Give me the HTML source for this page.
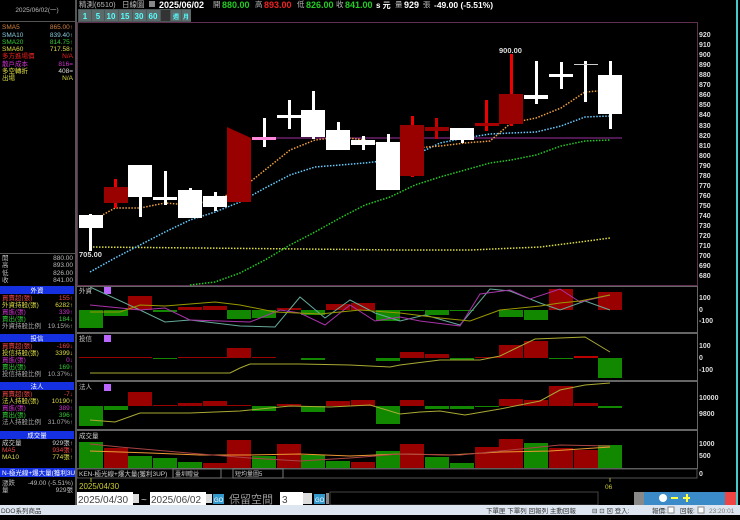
<!DOCTYPE html>
<html><head><meta charset="utf-8"><style>
body{margin:0;background:#000;width:740px;height:515px;overflow:hidden;font-family:"Liberation Sans","Noto Sans CJK TC",sans-serif}
svg text{font-family:"Liberation Sans","Noto Sans CJK TC",sans-serif}
</style></head><body>
<svg width="740" height="515" viewBox="0 0 740 515" xmlns="http://www.w3.org/2000/svg">
<rect width="740" height="515" fill="#000"/>
<!-- header -->
<g font-size="7.5" fill="#bbb">
<text x="79" y="7">精測(6510)</text><text x="122" y="7">日線圖</text>
<rect x="149" y="1" width="6" height="6" fill="#888"/>
<text x="159" y="8" font-size="9" font-weight="bold" fill="#fff">2025/06/02</text>
<text x="213" y="7">開</text><text x="222" y="8" font-size="9" font-weight="bold" fill="#2c2">880.00</text>
<text x="255" y="7">高</text><text x="264" y="8" font-size="9" font-weight="bold" fill="#e22">893.00</text>
<text x="297" y="7">低</text><text x="306" y="8" font-size="9" font-weight="bold" fill="#2c2">826.00</text>
<text x="336" y="7">收</text><text x="345" y="8" font-size="9" font-weight="bold" fill="#2c2">841.00</text>
<text x="376" y="8" font-size="8" font-weight="bold" fill="#fff">s 元</text>
<text x="395" y="7">量</text><text x="404" y="8" font-size="9" font-weight="bold" fill="#fff">929</text>
<text x="423" y="7">張</text><text x="434" y="8" font-size="8.5" font-weight="bold" fill="#fff">-49.00 (-5.51%)</text>
</g>
<!-- toolbar -->
<g font-size="8" font-weight="bold" fill="#5ff" text-anchor="middle">
<rect x="78" y="9" width="113" height="13" fill="#4a5858"/>
<rect x="79" y="10" width="12" height="11" fill="#5b6b6b"/><text x="85" y="19">1</text>
<rect x="92" y="10" width="12" height="11" fill="#5b6b6b"/><text x="98" y="19">5</text>
<rect x="105" y="10" width="13" height="11" fill="#5b6b6b"/><text x="111" y="19">10</text>
<rect x="119" y="10" width="13" height="11" fill="#5b6b6b"/><text x="125" y="19">15</text>
<rect x="133" y="10" width="13" height="11" fill="#5b6b6b"/><text x="139" y="19">30</text>
<rect x="147" y="10" width="13" height="11" fill="#5b6b6b"/><text x="153" y="19">60</text>
<rect x="161" y="10" width="9" height="11" fill="#333"/>
<rect x="171" y="10" width="10" height="11" fill="#5b6b6b"/><text x="176" y="19" font-size="6">週</text>
<rect x="182" y="10" width="9" height="11" fill="#5b6b6b"/><text x="186" y="19" font-size="6">月</text>
</g>
<!-- left panel -->
<rect x="75" y="0" width="2" height="505" fill="#555"/>
<text x="37" y="12" font-size="6.5" fill="#bbb" text-anchor="middle">2025/06/02(一)</text>
<rect x="0" y="21" width="75" height="1" fill="#555"/>
<g font-size="6.5">
<text x="2" y="29" fill="#d08040">SMA5</text><text x="73" y="29" fill="#d08040" text-anchor="end">865.00↑</text>
<text x="2" y="37" fill="#8cd">SMA10</text><text x="73" y="37" fill="#8cd" text-anchor="end">839.40↑</text>
<text x="2" y="44" fill="#3c3">SMA20</text><text x="73" y="44" fill="#3c3" text-anchor="end">814.75↑</text>
<text x="2" y="51" fill="#dd4">SMA60</text><text x="73" y="51" fill="#dd4" text-anchor="end">717.58↑</text>
<text x="2" y="58" fill="#e22">多方進場價</text><text x="73" y="58" fill="#e22" text-anchor="end">N/A</text>
<text x="2" y="66" fill="#c3c">散戶成本</text><text x="73" y="66" fill="#c3c" text-anchor="end">816=</text>
<text x="2" y="73" fill="#dd4">多空轉折</text><text x="73" y="73" fill="#ddd" text-anchor="end">408=</text>
<text x="2" y="80" fill="#dd4">出場</text><text x="73" y="80" fill="#dd4" text-anchor="end">N/A</text>
</g>
<rect x="0" y="253" width="75" height="1" fill="#555"/>
<g font-size="6.5" fill="#bbb">
<text x="2" y="260">開</text><text x="73" y="260" text-anchor="end">880.00</text>
<text x="2" y="267">高</text><text x="73" y="267" text-anchor="end">893.00</text>
<text x="2" y="275">低</text><text x="73" y="275" text-anchor="end">826.00</text>
<text x="2" y="282">收</text><text x="73" y="282" text-anchor="end">841.00</text>
</g>
<g font-size="6.5">
<rect x="0" y="286" width="74" height="8" fill="#1530e0"/><text x="37" y="292.5" fill="#fff" text-anchor="middle">外資</text>
<text x="2" y="300" fill="#e44">買賣超(張)</text><text x="73" y="300" fill="#e44" text-anchor="end">155↑</text>
<text x="2" y="307" fill="#dd4">外資持股(張)</text><text x="73" y="307" fill="#dd4" text-anchor="end">6282↑</text>
<text x="2" y="314" fill="#c3c">買進(張)</text><text x="73" y="314" fill="#c3c" text-anchor="end">339↑</text>
<text x="2" y="321" fill="#3c3">賣出(張)</text><text x="73" y="321" fill="#3c3" text-anchor="end">184↓</text>
<text x="2" y="328" fill="#aaa">外資持股比例</text><text x="73" y="328" fill="#aaa" text-anchor="end">19.15%↑</text>
<rect x="0" y="334" width="74" height="8" fill="#1530e0"/><text x="37" y="340.5" fill="#fff" text-anchor="middle">投信</text>
<text x="2" y="348" fill="#e44">買賣超(張)</text><text x="73" y="348" fill="#e44" text-anchor="end">-169↓</text>
<text x="2" y="355" fill="#dd4">投信持股(張)</text><text x="73" y="355" fill="#dd4" text-anchor="end">3399↓</text>
<text x="2" y="362" fill="#c3c">買進(張)</text><text x="73" y="362" fill="#c3c" text-anchor="end">0↓</text>
<text x="2" y="369" fill="#3c3">賣出(張)</text><text x="73" y="369" fill="#3c3" text-anchor="end">169↑</text>
<text x="2" y="376" fill="#aaa">投信持股比例</text><text x="73" y="376" fill="#aaa" text-anchor="end">10.37%↓</text>
<rect x="0" y="382" width="74" height="8" fill="#1530e0"/><text x="37" y="388.5" fill="#fff" text-anchor="middle">法人</text>
<text x="2" y="396" fill="#e44">買賣超(張)</text><text x="73" y="396" fill="#e44" text-anchor="end">-7↓</text>
<text x="2" y="403" fill="#dd4">法人持股(張)</text><text x="73" y="403" fill="#dd4" text-anchor="end">10190↑</text>
<text x="2" y="410" fill="#c3c">買進(張)</text><text x="73" y="410" fill="#c3c" text-anchor="end">389↑</text>
<text x="2" y="417" fill="#3c3">賣出(張)</text><text x="73" y="417" fill="#3c3" text-anchor="end">396↑</text>
<text x="2" y="424" fill="#aaa">法人持股比例</text><text x="73" y="424" fill="#aaa" text-anchor="end">31.07%↑</text>
<rect x="0" y="431" width="74" height="8" fill="#1530e0"/><text x="37" y="437.5" fill="#fff" text-anchor="middle">成交量</text>
<text x="2" y="445" fill="#ccc">成交量</text><text x="73" y="445" fill="#ccc" text-anchor="end">929張↑</text>
<text x="2" y="452" fill="#e44">MA5</text><text x="73" y="452" fill="#e44" text-anchor="end">934張↑</text>
<text x="2" y="459" fill="#dd4">MA10</text><text x="73" y="459" fill="#dd4" text-anchor="end">774張↑</text>
<rect x="0" y="468" width="75" height="9" fill="#1530e0"/><text x="2" y="475" fill="#fff">N-極光線+爆大量(獲利3U</text>
<text x="2" y="485" fill="#bbb">漲跌</text><text x="73" y="485" fill="#bbb" text-anchor="end">-49.00 (-5.51%)</text>
<text x="2" y="492" fill="#bbb">量</text><text x="73" y="492" fill="#bbb" text-anchor="end">929張</text>
</g>
<!-- main chart frame -->
<rect x="77.5" y="22.5" width="620" height="263" fill="none" stroke="#603050"/>
<rect x="736" y="0" width="2" height="505" fill="#4cc"/>
<g font-size="7" font-weight="bold" fill="#ddd">
<text x="699" y="37">920</text><text x="699" y="47">910</text><text x="699" y="57">900</text><text x="699" y="67">890</text><text x="699" y="77">880</text><text x="699" y="87">870</text><text x="699" y="97">860</text><text x="699" y="107">850</text><text x="699" y="117">840</text><text x="699" y="128">830</text><text x="699" y="138">820</text><text x="699" y="148">810</text><text x="699" y="158">800</text><text x="699" y="168">790</text><text x="699" y="178">780</text><text x="699" y="188">770</text><text x="699" y="198">760</text><text x="699" y="208">750</text><text x="699" y="218">740</text><text x="699" y="228">730</text><text x="699" y="238">720</text><text x="699" y="248">710</text><text x="699" y="258">700</text><text x="699" y="268">690</text><text x="699" y="278">680</text>
</g>
<line x1="252" y1="138" x2="622" y2="138" stroke="#a030a0" stroke-width="1"/>
<!-- MAs -->
<g fill="none" stroke-width="1.5" stroke-dasharray="1.5 1.5">
<polyline stroke="#dd4" points="90,247 200,248 300,249 400,250 470,250 540,247 580,242 610,238"/>
<polyline stroke="#2c2" points="190,285 215,282 240,273 265,260 290,245 315,232 340,218 365,205 390,197 415,185 440,177 465,170 490,163 511,160 536,155 561,146 585,141 610,140"/>
<polyline stroke="#6cf" points="90,272 115,258 140,245 165,232 190,220 215,212 240,202 265,188 290,175 315,167 340,165 365,163 390,160 415,155 440,143 465,138 490,134 511,133 536,132 561,126 585,117 610,116"/>
<polyline stroke="#f0a040" points="90,222 115,208 140,208 165,203 190,205 215,200 240,190 265,170 290,150 315,140 340,137 365,140 390,147 415,148 440,146 465,143 490,141 511,123 536,118 561,108 585,92 610,90"/>
</g>
<!-- candles -->
<g fill="#fff">
<rect x="89" y="214" width="3" height="37"/><rect x="79" y="215" width="24" height="13"/>
<rect x="114" y="179" width="3" height="29" fill="#e00"/><rect x="104" y="187" width="24" height="16" fill="#900"/>
<rect x="139" y="165" width="3" height="52"/><rect x="128" y="165" width="24" height="32"/>
<rect x="164" y="171" width="3" height="34"/><rect x="153" y="197" width="24" height="3"/>
<rect x="189" y="188" width="3" height="30"/><rect x="178" y="190" width="24" height="28"/>
<rect x="214" y="192" width="3" height="19"/><rect x="203" y="196" width="24" height="11"/>
<polygon points="227,127 251,138 251,202 227,202" fill="#900"/>
<rect x="263" y="118" width="3" height="29"/><rect x="252" y="137" width="24" height="3" fill="#f8d"/>
<rect x="288" y="100" width="3" height="29"/><rect x="277" y="115" width="24" height="3"/>
<rect x="312" y="91" width="3" height="48"/><rect x="301" y="110" width="24" height="27"/>
<rect x="337" y="122" width="3" height="12"/><rect x="326" y="130" width="24" height="20"/>
<rect x="362" y="136" width="3" height="14"/><rect x="351" y="140" width="24" height="5"/>
<rect x="387" y="134" width="3" height="10"/><rect x="376" y="142" width="24" height="48"/>
<rect x="411" y="116" width="3" height="61" fill="#e00"/><rect x="400" y="125" width="24" height="51" fill="#900"/>
<rect x="435" y="118" width="3" height="21" fill="#c00"/><rect x="425" y="127" width="24" height="4" fill="#900"/>
<rect x="461" y="128" width="3" height="15"/><rect x="450" y="128" width="24" height="12"/>
<rect x="485" y="100" width="3" height="31" fill="#e00"/><rect x="475" y="123" width="24" height="3" fill="#a00"/>
<rect x="510" y="54" width="3" height="72" fill="#e00"/><rect x="499" y="94" width="24" height="30" fill="#900"/>
<rect x="535" y="61" width="3" height="43"/><rect x="524" y="95" width="24" height="4"/>
<rect x="560" y="62" width="3" height="27"/><rect x="549" y="74" width="24" height="3"/>
<rect x="584" y="61" width="3" height="41"/><rect x="574" y="64" width="24" height="1" fill="#ccc"/>
<rect x="609" y="61" width="3" height="68"/><rect x="598" y="75" width="24" height="39"/>
</g>
<text x="79" y="257" font-size="7.5" font-weight="bold" fill="#ddd">705.00</text>
<text x="499" y="53" font-size="7.5" font-weight="bold" fill="#ddd">900.00</text>
<!-- sub panels frames -->
<g fill="#666">
<rect x="77" y="286" width="621" height="1"/><rect x="77" y="332" width="621" height="2"/><rect x="77" y="380" width="621" height="2"/><rect x="77" y="429" width="621" height="2"/><rect x="77" y="468" width="621" height="1"/><rect x="697" y="286" width="1" height="183"/>
</g>
<g font-size="6.5" fill="#ccc">
<text x="79" y="293">外資</text><text x="79" y="341">投信</text><text x="79" y="389">法人</text><text x="79" y="438">成交量</text>
</g>
<g fill="#b6f"><rect x="104" y="287" width="7" height="7"/><rect x="104" y="335" width="7" height="7"/><rect x="104" y="384" width="7" height="7"/></g>
<g font-size="7" font-weight="bold" fill="#ddd">
<text x="699" y="300">100</text><text x="699" y="312">0</text><text x="699" y="323">-100</text>
<text x="699" y="348">100</text><text x="699" y="360">0</text><text x="699" y="372">-100</text>
<text x="699" y="400">10000</text><text x="699" y="416">9800</text>
<text x="699" y="446">1000</text><text x="699" y="458">500</text><text x="699" y="476">0</text>
</g>
<!-- 外資 bars zero 310 -->
<g>
<rect x="79" y="310" width="24" height="18" fill="#180"/><rect x="104" y="310" width="24" height="6" fill="#180"/><rect x="128" y="296" width="24" height="14" fill="#900"/><rect x="153" y="310" width="24" height="2" fill="#180"/><rect x="178" y="307" width="24" height="3" fill="#900"/><rect x="203" y="306" width="24" height="4" fill="#900"/><rect x="227" y="310" width="24" height="9" fill="#180"/><rect x="252" y="310" width="24" height="8" fill="#180"/><rect x="277" y="308" width="24" height="2" fill="#900"/><rect x="301" y="310" width="24" height="5" fill="#180"/><rect x="326" y="304" width="24" height="6" fill="#900"/><rect x="351" y="303" width="24" height="7" fill="#900"/><rect x="376" y="310" width="24" height="11" fill="#180"/><rect x="400" y="310" width="24" height="1" fill="#180"/><rect x="425" y="310" width="24" height="5" fill="#180"/><rect x="450" y="310" width="24" height="1" fill="#180"/><rect x="499" y="310" width="24" height="7" fill="#180"/><rect x="524" y="310" width="24" height="10" fill="#180"/><rect x="549" y="289" width="24" height="21" fill="#900"/><rect x="598" y="292" width="24" height="18" fill="#900"/>
</g>
<g fill="none" stroke-width="1">
<polyline stroke="#6a9" points="90,287 140,310 165,322 190,320 240,326 275,327 300,297 325,318 350,300 375,313 400,321 425,315 460,325 490,289 510,291 540,303 560,310 585,301 610,310"/>
<polyline stroke="#a3a" points="90,305 140,310 165,308 190,320 250,322 280,310 300,313 325,325 350,305 375,321 400,317 420,321 460,326 480,294 510,290 530,299 560,289 580,302 610,295"/>
<polyline stroke="#990" points="90,312 120,312 140,305 165,306 215,302 240,305 275,312 320,314 360,310 400,313 440,318 470,321 500,310 540,306 560,303 580,301 610,295"/>
</g>
<!-- 投信 zero 358 -->
<g>
<rect x="79" y="357" width="73" height="1" fill="#900"/><rect x="153" y="358" width="24" height="1" fill="#180"/><rect x="178" y="357" width="49" height="1" fill="#900"/><rect x="227" y="348" width="24" height="10" fill="#900"/><rect x="252" y="357" width="24" height="1" fill="#900"/><rect x="301" y="358" width="24" height="2" fill="#180"/><rect x="376" y="358" width="24" height="3" fill="#180"/><rect x="400" y="352" width="24" height="6" fill="#900"/><rect x="425" y="354" width="24" height="4" fill="#900"/><rect x="450" y="358" width="24" height="2" fill="#180"/><rect x="475" y="357" width="24" height="1" fill="#900"/><rect x="499" y="345" width="24" height="13" fill="#900"/><rect x="524" y="341" width="24" height="17" fill="#900"/><rect x="549" y="358" width="24" height="1" fill="#180"/><rect x="574" y="356" width="24" height="2" fill="#b00"/><rect x="598" y="358" width="24" height="20" fill="#180"/>
</g>
<polyline fill="none" stroke="#aa3" points="90,373 230,373 240,368 250,364 300,364 350,365 390,367 400,365 440,360 480,360 500,356 535,339 585,337 610,352"/>
<!-- 法人 baseline 406 -->
<g>
<rect x="79" y="406" width="24" height="20" fill="#180"/><rect x="104" y="406" width="24" height="4" fill="#180"/><rect x="128" y="392" width="24" height="14" fill="#900"/><rect x="153" y="405" width="24" height="1" fill="#900"/><rect x="178" y="403" width="24" height="3" fill="#900"/><rect x="203" y="401" width="24" height="5" fill="#900"/><rect x="227" y="405" width="24" height="1" fill="#900"/><rect x="252" y="406" width="24" height="5" fill="#180"/><rect x="277" y="404" width="24" height="2" fill="#900"/><rect x="301" y="406" width="24" height="6" fill="#180"/><rect x="326" y="401" width="24" height="5" fill="#900"/><rect x="351" y="400" width="24" height="6" fill="#900"/><rect x="376" y="406" width="24" height="18" fill="#180"/><rect x="400" y="400" width="24" height="6" fill="#900"/><rect x="425" y="406" width="24" height="3" fill="#180"/><rect x="450" y="406" width="24" height="3" fill="#180"/><rect x="475" y="406" width="24" height="1" fill="#180"/><rect x="499" y="399" width="24" height="7" fill="#900"/><rect x="524" y="400" width="24" height="6" fill="#900"/><rect x="549" y="386" width="24" height="20" fill="#900"/><rect x="574" y="403" width="24" height="3" fill="#900"/><rect x="598" y="406" width="24" height="2" fill="#180"/>
</g>
<polyline fill="none" stroke="#aa3" points="90,420 115,422 140,413 190,413 240,411 290,406 330,407 370,405 400,414 420,412 440,411 465,415 500,409 540,401 560,390 585,385 610,383"/>
<!-- 成交量 baseline 468 -->
<g>
<rect x="79" y="442" width="24" height="26" fill="#180"/><rect x="104" y="448" width="24" height="20" fill="#900"/><rect x="128" y="456" width="24" height="12" fill="#180"/><rect x="153" y="458" width="24" height="10" fill="#180"/><rect x="178" y="462" width="24" height="6" fill="#180"/><rect x="203" y="463" width="24" height="5" fill="#900"/><rect x="227" y="440" width="24" height="28" fill="#900"/><rect x="252" y="456" width="24" height="12" fill="#180"/><rect x="277" y="444" width="24" height="24" fill="#900"/><rect x="301" y="455" width="24" height="13" fill="#180"/><rect x="326" y="461" width="24" height="7" fill="#180"/><rect x="351" y="462" width="24" height="6" fill="#900"/><rect x="376" y="451" width="24" height="17" fill="#180"/><rect x="400" y="444" width="24" height="24" fill="#900"/><rect x="425" y="457" width="24" height="11" fill="#180"/><rect x="450" y="463" width="24" height="5" fill="#180"/><rect x="475" y="447" width="24" height="21" fill="#900"/><rect x="499" y="439" width="24" height="29" fill="#900"/><rect x="524" y="443" width="24" height="25" fill="#180"/><rect x="549" y="448" width="24" height="20" fill="#900"/><rect x="574" y="450" width="24" height="18" fill="#900"/><rect x="598" y="445" width="24" height="23" fill="#180"/>
</g>
<polyline fill="none" stroke="#e93" points="90,451 150,453 200,455 250,455 300,454 350,456 400,454 450,455 500,452 550,451 610,447"/>
<polyline fill="none" stroke="#a44" points="90,444 120,447 200,454 250,458 300,461 350,458 400,454 460,455 500,451 560,445 610,446"/>
<!-- text bar -->
<rect x="77" y="469" width="620" height="9" fill="#000" stroke="#555"/>
<text x="79" y="476" font-size="6.5" fill="#ccc">KEN-極光線+爆大量(獲利3UP)</text>
<rect x="173" y="469" width="48" height="9" fill="#000" stroke="#777"/><text x="175" y="476" font-size="6" fill="#ccc">臺圳贈益</text>
<rect x="233" y="469" width="50" height="9" fill="#000" stroke="#777"/><text x="235" y="476" font-size="6" fill="#ccc">短均量圖5</text>
<line x1="91" y1="478" x2="91" y2="482" stroke="#aa3"/>
<text x="79" y="489" font-size="8" fill="#cc3">2025/04/30</text>
<line x1="610" y1="478" x2="610" y2="482" stroke="#aa3"/>
<text x="605" y="489" font-size="6.5" fill="#cc3">06</text>
<!-- bottom controls -->
<rect x="77" y="492" width="56" height="13" fill="#fff"/><text x="78" y="503" font-size="10" fill="#444">2025/04/30</text>
<rect x="133" y="494" width="6" height="9" fill="#ddd"/>
<text x="141" y="503" font-size="10" fill="#ccc">~</text>
<rect x="150" y="492" width="56" height="13" fill="#fff"/><text x="151" y="503" font-size="10" fill="#444">2025/06/02</text>
<rect x="206" y="494" width="6" height="9" fill="#ddd"/>
<rect x="213" y="494" width="11" height="10" fill="#39c"/><text x="214" y="502" font-size="6" fill="#fff">GO</text>
<text x="229" y="503" font-size="11" fill="#999">保留空間</text>
<rect x="280" y="492" width="23" height="13" fill="#fff"/><text x="282" y="503" font-size="10" fill="#444">3</text>
<rect x="303" y="493" width="9" height="11" fill="#ddd"/>
<rect x="314" y="494" width="11" height="10" fill="#39c"/><text x="315" y="502" font-size="6" fill="#fff">GO</text>
<rect x="326" y="493" width="3" height="11" fill="#888"/>
<rect x="330" y="492" width="268" height="13" fill="#000" stroke="#444"/>
<g>
<rect x="634" y="492" width="101" height="13" fill="#3a8bc8"/>
<rect x="634" y="492" width="10" height="13" fill="#888"/>
<circle cx="663" cy="498" r="4" fill="#fff"/>
<rect x="671" y="497" width="7" height="2" fill="#ff4"/><rect x="683" y="497" width="7" height="2" fill="#ff4"/><rect x="686" y="494" width="2" height="8" fill="#ff4"/>
<rect x="725" y="492" width="11" height="13" fill="#e44"/>
</g>
<!-- status bar -->
<rect x="0" y="505" width="740" height="10" fill="#dde6f0"/>
<g font-size="6.5" fill="#333">
<text x="1" y="513">DDO系列商品</text>
<text x="486" y="513">下單匣 下單列 回報列 主動回報</text>
<text x="592" y="513">⊟  ⊡  ⊠  登入:</text>
<text x="652" y="513">報價:</text><rect x="668" y="507" width="6" height="6" fill="#fff" stroke="#888"/>
<text x="680" y="513">回報:</text><rect x="698" y="507" width="6" height="6" fill="#fff" stroke="#888"/>
<text x="709" y="513" fill="#777">23:20:01</text>
</g>
</svg>
</body></html>
